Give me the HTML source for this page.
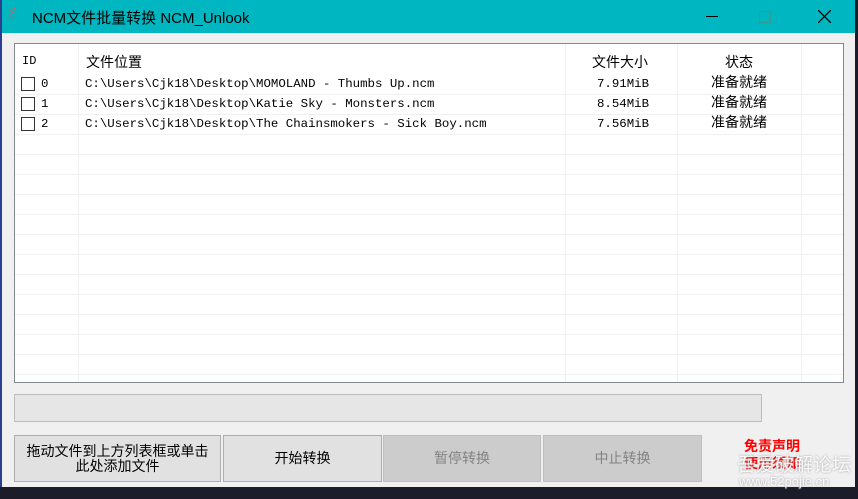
<!DOCTYPE html><html><head><meta charset="utf-8"><style>
*{margin:0;padding:0;box-sizing:border-box}
body{width:858px;height:499px;position:relative;overflow:hidden;background:#1b1b2a;font-family:"Liberation Sans","Noto Sans CJK SC",sans-serif}
.win{position:absolute;left:0;top:0;width:855px;height:487px;background:#f0f0f0}
.lb{position:absolute;left:0;top:0;width:2px;height:487px;background:#2a3f8f}
.title{position:absolute;left:0;top:0;width:855px;height:33px;background:#00b6c1;font-size:15px;color:#000}
.title span{position:absolute;left:32px;top:7px}
.list{position:absolute;left:14px;top:43px;width:830px;height:340px;background:#fff;border:1px solid #828790;overflow:hidden}
.col{position:absolute;top:0;height:340px;border-right:1px solid #f0f0f0}
.hl{position:absolute;left:0;width:830px;height:1px;background:#f0f0f0}
.h{position:absolute;top:8px;font-size:14px}
.r{position:absolute;font-family:"Liberation Mono","Noto Sans CJK SC",monospace;font-size:12.4px;height:20px;line-height:20px}
.cb{position:absolute;left:6px;width:14px;height:14px;border:1px solid #333;background:#fff}
.btn{position:absolute;top:435px;height:47px;border:1px solid #adadad;background:#e1e1e1;font-size:14px;text-align:center;display:flex;align-items:center;justify-content:center;line-height:15px}
.dis{background:#cccccc;border-color:#bfbfbf;color:#838383}
</style></head><body>
<div class="win">
<div class="title"><span style="left:8px;top:5px;color:#b66;font-size:14px">ℰ</span><span>NCM文件批量转换 NCM_Unlook</span>
<div style="position:absolute;left:706px;top:16px;width:12px;height:1px;background:#000"></div>
<div style="position:absolute;left:759px;top:11px;width:12px;height:12px;border:1px solid #2f9e90"></div>
<svg style="position:absolute;left:818px;top:10px" width="13" height="13"><path d="M0 0L13 13M13 0L0 13" stroke="#000" stroke-width="1.2"/></svg>
</div>
<div class="list">
<div class="col" style="left:0;width:64px"></div>
<div class="col" style="left:64px;width:487px"></div>
<div class="col" style="left:551px;width:112px"></div>
<div class="col" style="left:663px;width:124px"></div>
<div class="hl" style="top:50px"></div><div class="hl" style="top:70px"></div><div class="hl" style="top:90px"></div><div class="hl" style="top:110px"></div><div class="hl" style="top:130px"></div><div class="hl" style="top:150px"></div><div class="hl" style="top:170px"></div><div class="hl" style="top:190px"></div><div class="hl" style="top:210px"></div><div class="hl" style="top:230px"></div><div class="hl" style="top:250px"></div><div class="hl" style="top:270px"></div><div class="hl" style="top:290px"></div><div class="hl" style="top:310px"></div><div class="hl" style="top:330px"></div>
<div class="h" style="left:7px;font-family:'Liberation Mono',monospace;font-size:12px;top:10px">ID</div>
<div class="h" style="left:71px">文件位置</div>
<div class="h" style="left:577px">文件大小</div>
<div class="h" style="left:710px">状态</div>
<div class="cb" style="top:33px"></div><div class="r" style="left:26px;top:30px">0</div>
<div class="r" style="left:70px;top:30px">C:\Users\Cjk18\Desktop\MOMOLAND - Thumbs Up.ncm</div>
<div class="r" style="left:582px;top:30px">7.91MiB</div><div class="r" style="left:696px;top:30px;font-size:14px">准备就绪</div>
<div class="cb" style="top:53px"></div><div class="r" style="left:26px;top:50px">1</div>
<div class="r" style="left:70px;top:50px">C:\Users\Cjk18\Desktop\Katie Sky - Monsters.ncm</div>
<div class="r" style="left:582px;top:50px">8.54MiB</div><div class="r" style="left:696px;top:50px;font-size:14px">准备就绪</div>
<div class="cb" style="top:73px"></div><div class="r" style="left:26px;top:70px">2</div>
<div class="r" style="left:70px;top:70px">C:\Users\Cjk18\Desktop\The Chainsmokers - Sick Boy.ncm</div>
<div class="r" style="left:582px;top:70px">7.56MiB</div><div class="r" style="left:696px;top:70px;font-size:14px">准备就绪</div>
</div>
<div style="position:absolute;left:14px;top:394px;width:748px;height:28px;background:#e6e6e6;border:1px solid #bcbcbc"></div>
<div class="btn" style="left:14px;width:207px">拖动文件到上方列表框或单击<br>此处添加文件</div>
<div class="btn" style="left:223px;width:159px">开始转换</div>
<div class="btn dis" style="left:383px;width:158px">暂停转换</div>
<div class="btn dis" style="left:543px;width:159px">中止转换</div>
<div style="position:absolute;left:744px;top:438px;color:#f00;font-size:14px;line-height:17px;font-weight:bold">免责声明<br>使用须知</div>
<div style="position:absolute;left:737px;top:450px;color:rgba(255,255,255,.9);font-size:19px;text-shadow:0 0 2px #999">吾爱破解论坛</div>
<div style="position:absolute;left:739px;top:474px;color:rgba(255,255,255,.9);font-size:13px;text-shadow:0 0 2px #999">www.52pojie.cn</div>
<div class="lb"></div>
</div>
</body></html>
